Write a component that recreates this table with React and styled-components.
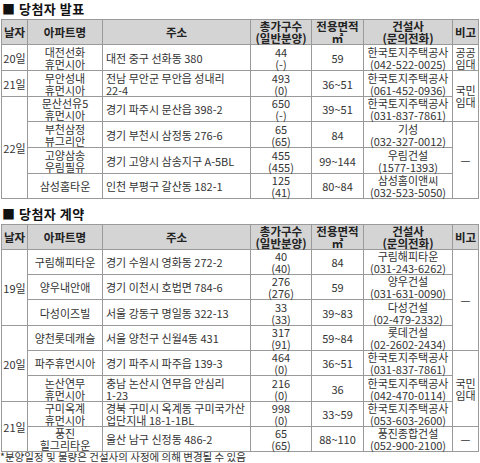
import React from 'react';
import styled, { createGlobalStyle } from 'styled-components';

const colors = {
    text: '#333333',
    title: '#111111',
    headBg: '#d4d4d4',
    line: '#9a9a9a',
    outer: '#7a7a7a',
};

const GlobalStyle = createGlobalStyle`
    html, body {
        margin: 0;
        padding: 0;
        background: #ffffff;
    }
    body {
        font-family: 'Noto Sans CJK KR', 'Noto Sans', sans-serif;
        color: ${colors.text};
    }
`;

const Page = styled.div`
    width: 480px;
    padding: 0 0 0 1px;
    box-sizing: border-box;
`;

const SectionTitle = styled.div`
    font-size: 13px;
    font-weight: 700;
    line-height: 15px;
    color: ${colors.title};
    margin: ${(p) => (p.$first ? '1px 0 3px 1px' : '7px 0 3px 1px')};
    letter-spacing: 0.5px;
`;

const Table = styled.table`
    width: 477px;
    border-collapse: collapse;
    table-layout: fixed;
    border: 1px solid ${colors.outer};
    font-size: 11px;
    line-height: 12px;
`;

const HeadCell = styled.th`
    background: ${colors.headBg};
    border: 1px solid ${colors.line};
    height: 23px;
    padding: 0;
    font-weight: 700;
    font-size: 11.5px;
    line-height: 12px;
    color: #222;
    text-align: center;
    vertical-align: middle;
    white-space: nowrap;
`;

const Row = styled.tr`
    height: ${(p) => p.$h}px;
`;

const Cell = styled.td`
    border: 1px solid ${colors.line};
    padding: ${(p) => (p.$left ? '0 0 0 3px' : '0')};
    text-align: ${(p) => (p.$left ? 'left' : 'center')};
    vertical-align: middle;
    white-space: nowrap;
    overflow: visible;
    color: ${colors.text};
`;

const Footnote = styled.div`
    font-size: 10.5px;
    line-height: 10px;
    color: ${colors.text};
    white-space: nowrap;
    margin-left: -1px;
`;

const Lines = ({ children }) => {
    const parts = String(children).split('|');
    return parts.map((t, i) => (
        <React.Fragment key={i}>
            {i > 0 && <br />}
            {t}
        </React.Fragment>
    ));
};

const Cols = () => (
    <colgroup>
        <col style={{ width: 26 }} />
        <col style={{ width: 75 }} />
        <col style={{ width: 148 }} />
        <col style={{ width: 61 }} />
        <col style={{ width: 52 }} />
        <col style={{ width: 89 }} />
        <col style={{ width: 26 }} />
    </colgroup>
);

const Head = () => (
    <thead>
        <tr>
            <HeadCell>날자</HeadCell>
            <HeadCell>아파트명</HeadCell>
            <HeadCell>주소</HeadCell>
            <HeadCell><Lines>총가구수|(일반분양)</Lines></HeadCell>
            <HeadCell><Lines>전용면적|㎡</Lines></HeadCell>
            <HeadCell><Lines>건설사|(문의전화)</Lines></HeadCell>
            <HeadCell>비고</HeadCell>
        </tr>
    </thead>
);

// date / note: { text, span } only on the first row of a group
const announce = [
    { h: 26, date: { text: '20일', span: 1 }, name: '대전선화|휴먼시아', addr: '대전 중구 선화동 380', units: '44|(-)', area: '59', builder: '한국토지주택공사|(042-522-0025)', note: { text: '공공|임대', span: 1 } },
    { h: 26, date: { text: '21일', span: 1 }, name: '무안성내|휴먼시아', addr: '전남 무안군 무안읍 성내리|22-4', units: '493|(0)', area: '36~51', builder: '한국토지주택공사|(061-452-0936)', note: { text: '국민|임대', span: 2 } },
    { h: 25, date: { text: '22일', span: 4 }, name: '문산선유5|휴먼시아', addr: '경기 파주시 문산읍 398-2', units: '650|(-)', area: '39~51', builder: '한국토지주택공사|(031-837-7861)' },
    { h: 26, name: '부천삼정|뷰그리안', addr: '경기 부천시 삼정동 276-6', units: '65|(65)', area: '84', builder: '기성|(032-327-0012)', note: { text: '—', span: 3 } },
    { h: 26, name: '고양삼송|우림필유', addr: '경기 고양시 삼송지구 A-5BL', units: '455|(455)', area: '99~144', builder: '우림건설|(1577-1393)' },
    { h: 25, name: '삼성홈타운', addr: '인천 부평구 갈산동 182-1', units: '125|(41)', area: '80~84', builder: '삼성홈이앤씨|(032-523-5050)' },
];

const contract = [
    { h: 25, date: { text: '19일', span: 3 }, name: '구림해피타운', addr: '경기 수원시 영화동 272-2', units: '40|(40)', area: '84', builder: '구림해피타운|(031-243-6262)', note: { text: '—', span: 4 } },
    { h: 25, name: '양우내안애', addr: '경기 이천시 호법면 784-6', units: '276|(276)', area: '59', builder: '양우건설|(031-631-0090)' },
    { h: 26, name: '다성이즈빌', addr: '서울 강동구 명일동 322-13', units: '33|(33)', area: '39~83', builder: '다성건설|(02-479-2332)' },
    { h: 25, date: { text: '20일', span: 3 }, name: '양천롯데캐슬', addr: '서울 양천구 신월4동 431', units: '317|(91)', area: '59~84', builder: '롯데건설|(02-2602-2434)' },
    { h: 25, name: '파주휴먼시아', addr: '경기 파주시 파주읍 139-3', units: '464|(0)', area: '36~51', builder: '한국토지주택공사|(031-837-7861)', note: { text: '국민|임대', span: 3 } },
    { h: 26, name: '논산연무|휴먼시아', addr: '충남 논산시 연무읍 안심리|1-23', units: '216|(0)', area: '36', builder: '한국토지주택공사|(042-470-0114)' },
    { h: 25, date: { text: '21일', span: 2 }, name: '구미옥계|휴먼시아', addr: '경북 구미시 옥계동 구미국가산|업단지내 18-1-1BL', units: '998|(0)', area: '33~59', builder: '한국토지주택공사|(053-603-2600)' },
    { h: 25, name: '풍진|힐그리타운', addr: '울산 남구 신정동 486-2', units: '65|(65)', area: '88~110', builder: '풍진종합건설|(052-900-2100)', note: { text: '—', span: 1 } },
];

const DataTable = ({ rows }) => (
    <Table>
        <Cols />
        <Head />
        <tbody>
            {rows.map((r, i) => (
                <Row key={i} $h={r.h}>
                    {r.date && <Cell rowSpan={r.date.span}>{r.date.text}</Cell>}
                    <Cell><Lines>{r.name}</Lines></Cell>
                    <Cell $left><Lines>{r.addr}</Lines></Cell>
                    <Cell><Lines>{r.units}</Lines></Cell>
                    <Cell>{r.area}</Cell>
                    <Cell><Lines>{r.builder}</Lines></Cell>
                    {r.note && <Cell rowSpan={r.note.span}><Lines>{r.note.text}</Lines></Cell>}
                </Row>
            ))}
        </tbody>
    </Table>
);

export default function App() {
    return (
        <Page>
            <GlobalStyle />
            <SectionTitle $first>■ 당첨자 발표</SectionTitle>
            <DataTable rows={announce} />
            <SectionTitle>■ 당첨자 계약</SectionTitle>
            <DataTable rows={contract} />
            <Footnote>*분양일정 및 물량은 건설사의 사정에 의해 변경될 수 있음</Footnote>
        </Page>
    );
}
